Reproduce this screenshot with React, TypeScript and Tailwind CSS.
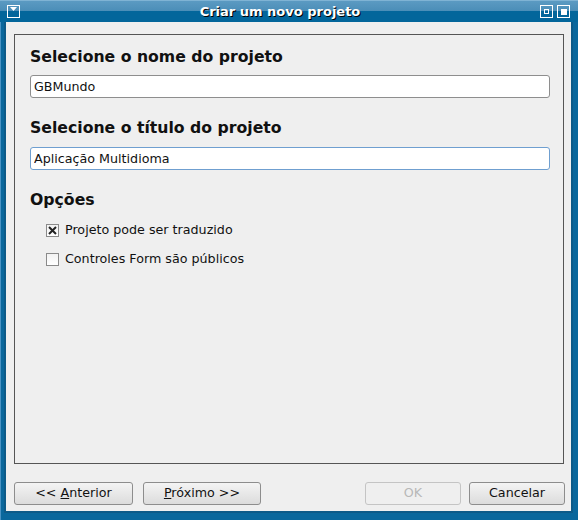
import { ReactNode } from "react";

const font = "font-['DejaVu_Sans',Verdana,sans-serif]";

function TitleButton({ children }: { children: ReactNode }) {
  return (
    <div className="w-[13px] h-[13px] border border-white flex items-center justify-center">
      {children}
    </div>
  );
}

function Button({ children, disabled }: { children: ReactNode; disabled?: boolean }) {
  return (
    <button
      className={`w-full h-[23px] rounded-[3px] border text-[12.7px] leading-none ${
        disabled
          ? "border-[#c4c4c4] bg-[#efefef] text-[#b8b8b8]"
          : "border-[#8d8d8d] bg-gradient-to-b from-[#f4f4f4] to-[#dcdcdc] text-[#111]"
      }`}
    >
      {children}
    </button>
  );
}

function Check({ checked, label }: { checked?: boolean; label: string }) {
  return (
    <label className="flex items-center h-[20px]">
      <span className="w-[13px] h-[13px] border border-[#8a8a8a] bg-gradient-to-b from-[#f2f2f2] to-white flex items-center justify-center">
        {checked && (
          <svg width="9" height="9" viewBox="0 0 9 9">
            <path d="M1 1 L8 8 M8 1 L1 8" stroke="#222" strokeWidth="2" />
          </svg>
        )}
      </span>
      <span className="ml-[6px] text-[12.7px] text-[#111]">{label}</span>
    </label>
  );
}

export default function App() {
  return (
    <div className={`w-[578px] h-[520px] flex flex-col bg-[#0a679c] ${font}`}>
      {/* title bar */}
      <div className="h-[22px] flex items-center px-[7px] bg-gradient-to-b from-[#5b9ac2] from-0% via-[#4a8db7] via-50% to-[#03669b] to-50% border-t border-[#7fb3d4]">
        <TitleButton>
          <svg width="7" height="4" viewBox="0 0 7 4" className="-mt-[5px]">
            <path d="M0 0 H7 L3.5 4 Z" fill="white" />
          </svg>
        </TitleButton>
        <div className="flex-1 text-center text-white text-[13px] font-bold [text-shadow:1px_1px_0_#000]">
          Criar um novo projeto
        </div>
        <div className="flex gap-[4px] mr-[1px]">
          <TitleButton>
            <span className="w-[5px] h-[5px] border border-white" />
          </TitleButton>
          <TitleButton>
            <span className="w-[6px] h-[6px] bg-white" />
          </TitleButton>
        </div>
      </div>

      {/* window frame */}
      <div className="flex-1 flex pl-[3px] pr-[5px] pb-[7px] border-l border-[#4a93c4] bg-[#0a679c]">
        <div className="flex-1 flex border-l-[2px] border-r-[2px] border-b-[2px] border-[#0d5a88]">
          <div className="flex-1 flex flex-col bg-[#efefef] pl-[8px] pr-[7px] pt-[12px] pb-[5px]">
            <div className="h-[430px] border border-[#555] pl-[15px] pr-[13px] pt-[12px]">
              <h2 className="text-[15.7px] leading-[19px] font-bold text-[#111]">Selecione o nome do projeto</h2>
              <input
                readOnly
                value="GBMundo"
                className="mt-[9px] w-full h-[23px] rounded-[3px] border border-[#8e8e8e] bg-white px-[3px] text-[12.7px] text-[#111] outline-none"
              />
              <h2 className="mt-[20px] text-[15.7px] leading-[19px] font-bold text-[#111]">Selecione o título do projeto</h2>
              <input
                readOnly
                value="Aplicação Multidioma"
                className="mt-[10px] w-full h-[23px] rounded-[3px] border border-[#6f9fd0] bg-white px-[3px] text-[12.7px] text-[#111] outline-none"
              />
              <h2 className="mt-[20px] text-[15.7px] leading-[19px] font-bold text-[#111]">Opções</h2>
              <div className="mt-[11px] ml-[16px] flex flex-col gap-[9px]">
                <Check checked label="Projeto pode ser traduzido" />
                <Check label="Controles Form são públicos" />
              </div>
            </div>

            <div className="mt-[18px] -mr-[1px] flex">
              <div className="flex gap-[10px]">
                <div className="w-[119px] flex">
                  <Button>
                    &lt;&lt; <u>A</u>nterior
                  </Button>
                </div>
                <div className="w-[118px] flex">
                  <Button>
                    <u>P</u>róximo &gt;&gt;
                  </Button>
                </div>
              </div>
              <div className="ml-auto flex gap-[8px]">
                <div className="w-[96px] flex">
                  <Button disabled>OK</Button>
                </div>
                <div className="w-[96px] flex">
                  <Button>Cancelar</Button>
                </div>
              </div>
            </div>
          </div>
        </div>
      </div>
    </div>
  );
}
